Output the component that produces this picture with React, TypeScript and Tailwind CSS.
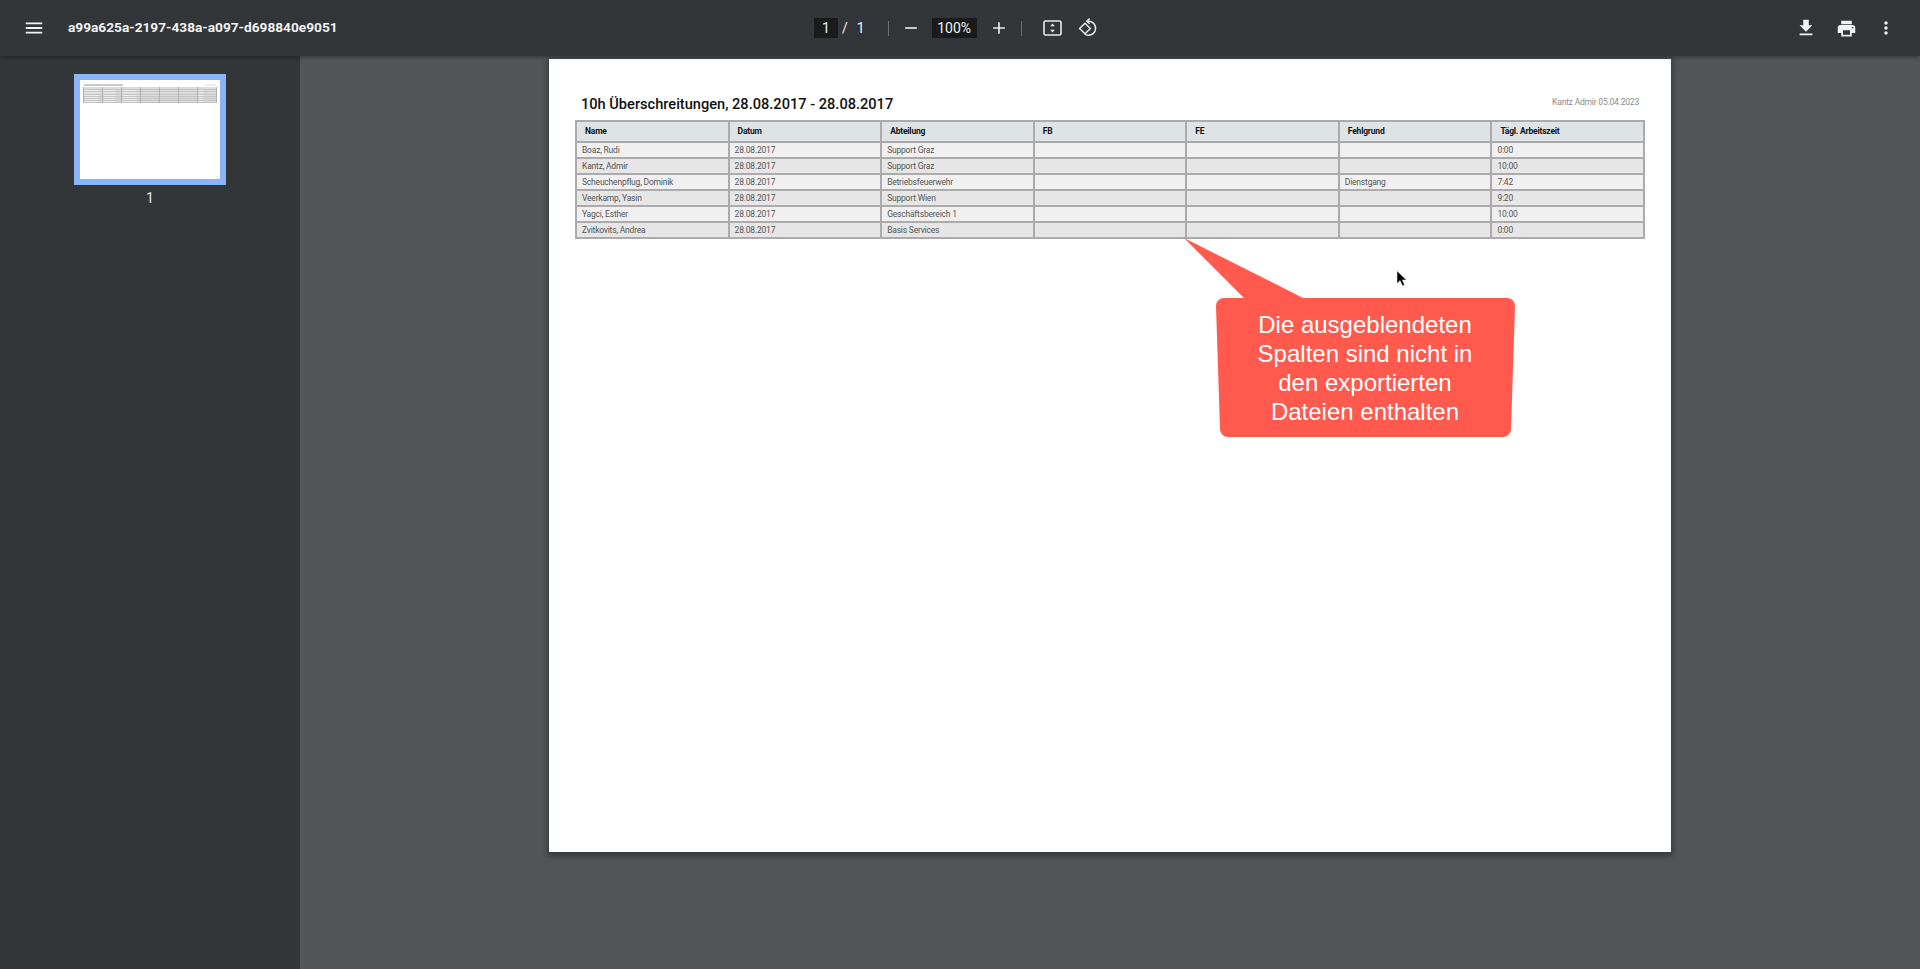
const rows = [
  ["Boaz, Rudi", "28.08.2017", "Support Graz", "", "", "", "0:00"],
  ["Kantz, Admir", "28.08.2017", "Support Graz", "", "", "", "10:00"],
  ["Scheuchenpflug, Dominik", "28.08.2017", "Betriebsfeuerwehr", "", "", "Dienstgang", "7:42"],
  ["Veerkamp, Yasin", "28.08.2017", "Support Wien", "", "", "", "9:20"],
  ["Yagci, Esther", "28.08.2017", "Geschäftsbereich 1", "", "", "", "10:00"],
  ["Zvitkovits, Andrea", "28.08.2017", "Basis Services", "", "", "", "0:00"],
];
const heads = ["Name", "Datum", "Abteilung", "FB", "FE", "Fehlgrund", "Tägl. Arbeitszeit"];

function Icon({ d, className }: { d: string; className: string }) {
  return (
    <svg viewBox="0 0 24 24" className={className} fill="currentColor">
      <path d={d} />
    </svg>
  );
}

function Thumb() {
  const ys = [9, 11.5, 14, 16, 18, 20, 22];
  const xs = [3, 22, 41, 60, 79, 98, 117, 136];
  const texts = [10, 12.5, 15, 17, 19, 21];
  return (
    <svg viewBox="0 0 140 99" className="block w-[140px] h-[99px] bg-white">
      <rect x="3" y="7" width="134" height="16" fill="#dcdcdc" />
      <rect x="4" y="4.4" width="39" height="1.2" fill="#a8a8a8" />
      <rect x="125" y="4.6" width="11" height="0.9" fill="#d8d8d8" />
      {ys.map((y) => (
        <rect key={y} x="3" y={y} width="134" height="0.6" fill="#b4b4b4" />
      ))}
      {xs.map((x) => (
        <rect key={x} x={x} y="7" width="0.8" height="16" fill="#a8a8a8" />
      ))}
      {texts.map((y) => (
        <g key={y} fill="#f4f4f4">
          <rect x="4.5" y={y} width="14" height="0.7" />
          <rect x="23.5" y={y} width="12" height="0.7" />
          <rect x="42.5" y={y} width="14" height="0.7" />
          <rect x="118.5" y={y} width="5" height="0.7" />
        </g>
      ))}
    </svg>
  );
}

export default function App() {
  return (
    <div className="flex flex-col h-screen overflow-hidden bg-[#525659] font-['Roboto',sans-serif]">
      <header className="relative z-10 flex items-center h-[56px] shrink-0 bg-[#323639] text-[#f1f3f4] shadow-[0_1px_4px_rgba(0,0,0,0.4)]">
        <div className="flex items-center w-[760px] shrink-0">
          <Icon
            className="w-[22px] h-[22px] ml-[23px]"
            d="M3 18h18v-2H3v2zm0-5h18v-2H3v2zm0-7v2h18V6H3z"
          />
          <span className="ml-[23px] text-[13.7px] font-bold leading-none">
            a99a625a-2197-438a-a097-d698840e9051
          </span>
        </div>
        <div className="flex items-center ml-[54px] text-[14px]">
          <span className="flex items-center justify-center w-[24px] h-[20px] bg-[#191b1c]">1</span>
          <span className="ml-[4px]">/</span>
          <span className="ml-[9px]">1</span>
          <span className="w-px h-[15px] bg-[#6b6f72] ml-[23px]" />
          <Icon className="w-[20px] h-[20px] ml-[12px] text-[#e8eaed]" d="M19 13H5v-2h14v2z" />
          <span className="flex items-center justify-center w-[45px] h-[20px] ml-[11px] bg-[#191b1c]">100%</span>
          <Icon className="w-[20px] h-[20px] ml-[12px] text-[#e8eaed]" d="M19 13h-6v6h-2v-6H5v-2h6V5h2v6h6v2z" />
          <span className="w-px h-[15px] bg-[#6b6f72] ml-[12px]" />
          <svg viewBox="0 0 19 16" className="w-[19px] h-[16px] ml-[21px] text-[#e8eaed]" fill="none" stroke="currentColor">
            <rect x="1" y="1" width="17" height="14" rx="1.6" strokeWidth="1.6" />
            <path d="M9.5 3.6l2.3 2.6H7.2zM9.5 12.4l2.3-2.6H7.2z" fill="currentColor" stroke="none" />
          </svg>
          <svg viewBox="0 0 20 20" className="w-[20px] h-[20px] ml-[16px] text-[#e8eaed]" fill="none" stroke="currentColor" strokeWidth="1.5">
            <path d="M1.6 10.5L7 5.2l5.4 5.3L7 15.8z" />
            <path d="M9 3.2h2.2a7 7 0 1 1-1.2 14 7 7 0 0 1-3.4-1" />
            <path d="M11.6 0.6L8.8 3.2l2.8 2.6" />
          </svg>
        </div>
        <div className="flex items-center ml-auto mr-[24px] text-[#f1f3f4]">
          <Icon className="w-[22px] h-[22px]" d="M19 9h-4V3H9v6H5l7 7 7-7zM5 18v2h14v-2H5z" />
          <Icon
            className="w-[21px] h-[21px] ml-[19px]"
            d="M19 8H5c-1.66 0-3 1.34-3 3v6h4v4h12v-4h4v-6c0-1.66-1.34-3-3-3zm-3 11H8v-5h8v5zm3-7c-.55 0-1-.45-1-1s.45-1 1-1 1 .45 1 1-.45 1-1 1zm-1-9H6v4h12V3z"
          />
          <Icon
            className="w-[20px] h-[20px] ml-[19px]"
            d="M12 8c1.1 0 2-.9 2-2s-.9-2-2-2-2 .9-2 2 .9 2 2 2zm0 2c-1.1 0-2 .9-2 2s.9 2 2 2 2-.9 2-2-.9-2-2-2zm0 6c-1.1 0-2 .9-2 2s.9 2 2 2 2-.9 2-2-.9-2-2-2z"
          />
        </div>
      </header>

      <div className="flex flex-1 min-h-0">
        <aside className="w-[300px] shrink-0 bg-[#323639] flex flex-col items-center pt-[18px]">
          <div className="border-[6px] border-[#8ab4f8]">
            <Thumb />
          </div>
          <span className="mt-[5px] text-[14px] leading-[16px] text-[#e8eaed]">1</span>
        </aside>

        <main className="flex-1 min-w-0 pt-[3px] pl-[249px]">
          <div className="relative w-[1122px] h-[793px] bg-white shadow-[0_2px_6px_2px_rgba(0,0,0,0.35)] pt-[35px] px-[26px]">
            <div className="flex items-center justify-between h-[26px] pl-[6px] pr-[6px]">
              <h1 className="text-[14.6px] font-medium leading-none text-[#111] mb-[5px]">
                10h Überschreitungen, 28.08.2017 - 28.08.2017
              </h1>
              <span className="text-[8.5px] tracking-[-0.2px] leading-none text-[#8a8a8a] mb-[9px]">Kantz Admir 05.04.2023</span>
            </div>
            <table className="w-[1070px] table-fixed border-collapse border-2 border-[#ababab] text-[8.5px] tracking-[-0.2px] leading-none text-[#555]">
              <thead>
                <tr className="h-[21px] bg-[#dee3e6]">
                  {heads.map((h) => (
                    <th key={h} className="border-2 border-[#ababab] pl-[8px] text-left font-bold text-[#111]">
                      {h}
                    </th>
                  ))}
                </tr>
              </thead>
              <tbody>
                {rows.map((r, i) => (
                  <tr key={r[0]} className={i % 2 === 0 ? "h-[16px] bg-[#f0f0f0]" : "h-[16px] bg-[#e6e6e6]"}>
                    {r.map((c, j) => (
                      <td key={j} className="border-2 border-[#ababab] pl-[5px] pt-px">
                        {c}
                      </td>
                    ))}
                  </tr>
                ))}
              </tbody>
            </table>

            <svg
              viewBox="0 0 340 202"
              className="absolute left-[633px] top-[178px] w-[340px] h-[202px]"
            >
              <path
                d="M2 1 L62 61 L121 61 L2 1 Z M34 61 H325 a8 8 0 0 1 8 8 L329 192 a8 8 0 0 1 -8 8 H46 a8 8 0 0 1 -8 -8 L34 69 a8 8 0 0 1 8 -8 Z"
                fill="#ff5a4d"
              />
            </svg>
            <div className="absolute left-[667px] top-[239px] w-[298px] h-[140px] flex items-center justify-center text-center text-white font-['Liberation_Sans',sans-serif] text-[24px] leading-[29px]">
              <p>
                Die ausgeblendeten
                <br />
                Spalten sind nicht in
                <br />
                den exportierten
                <br />
                Dateien enthalten
              </p>
            </div>
            <svg viewBox="0 0 12 19" className="absolute left-[847px] top-[211px] w-[11px] h-[17px]">
              <path d="M1 1v14l3.4-3.2L7 17.5l2.4-1-2.6-5.4H11.5z" fill="#000" stroke="#ddd" strokeWidth="0.6" />
            </svg>
          </div>
        </main>
      </div>
    </div>
  );
}
